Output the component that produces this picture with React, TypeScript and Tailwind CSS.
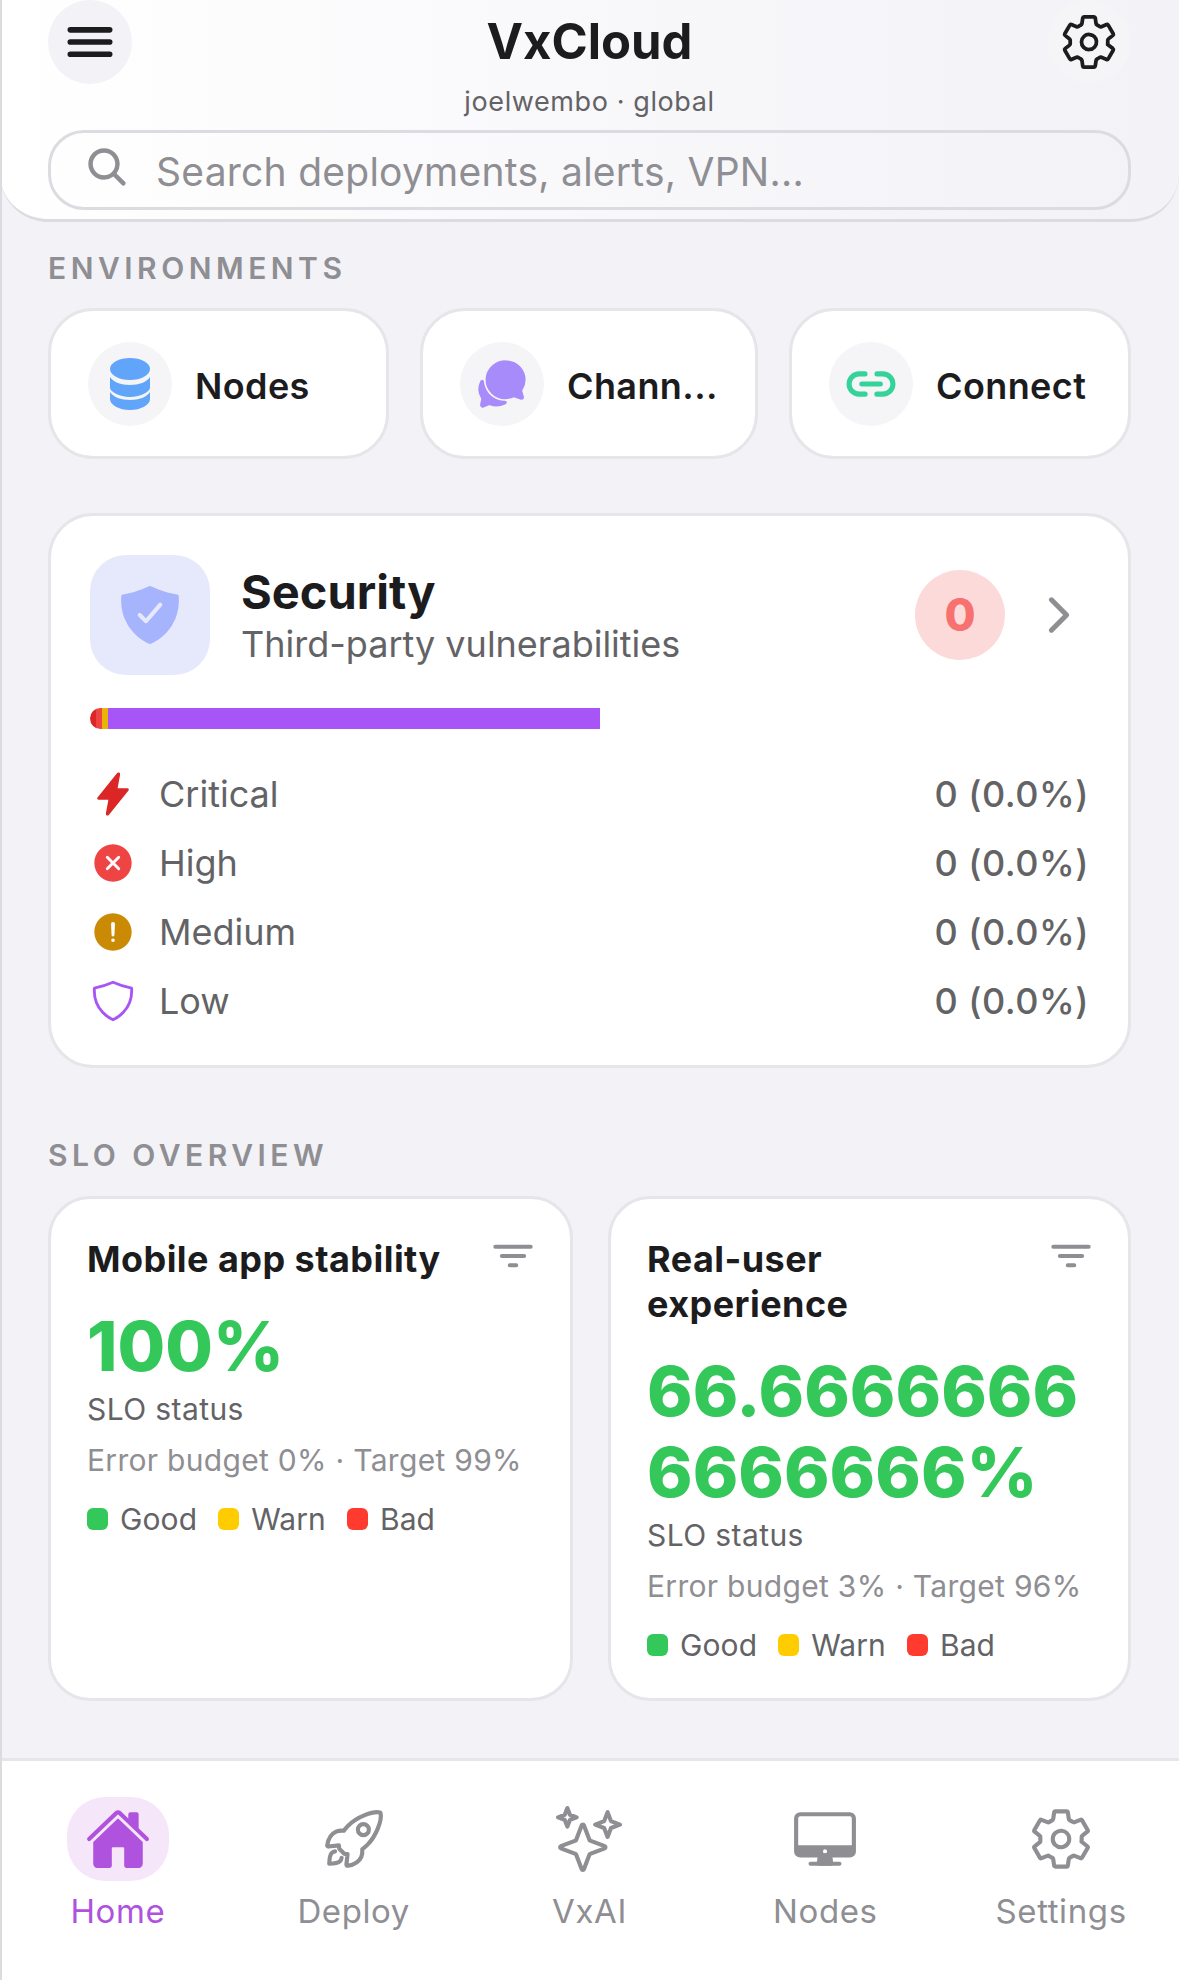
import type { ReactNode } from 'react';
import {
  IoMenu,
  IoSettingsOutline,
  IoSearch,
  IoChatbubbles,
  IoLink,
  IoShieldCheckmark,
  IoChevronForward,
  IoFlash,
  IoCloseCircle,
  IoAlertCircle,
  IoShieldOutline,
  IoFilter,
  IoHome,
  IoRocketOutline,
  IoSparklesOutline,
  IoDesktopOutline,
} from 'react-icons/io5';

function SectionLabel({ children, className }: { children: ReactNode; className: string }) {
  return (
    <div className={`px-[48px] text-[30px] leading-[36px] font-semibold tracking-[4.5px] text-[#8e8e93] ${className}`}>
      {children}
    </div>
  );
}

function DatabaseIcon() {
  return (
    <svg width="40" height="52" viewBox="0 0 40 52" className="text-[#60a5fa]" fill="currentColor">
      <ellipse cx="20" cy="11" rx="20" ry="11" />
      <path d="M0 19c3 5 11 8 20 8s17-3 20-8v11c0 3-9 9-20 9S0 33 0 30z" />
      <path d="M0 34c3 5 11 8 20 8s17-3 20-8v7c0 6-9 11-20 11S0 47 0 41z" />
    </svg>
  );
}

function EnvCard({ icon, label }: { icon: ReactNode; label: string }) {
  return (
    <div className="min-w-0 h-[151px] flex items-center gap-[23px] pl-[37px] bg-white border-[3px] border-[#e5e5ea] rounded-[45px]">
      <div className="w-[84px] h-[84px] shrink-0 rounded-full bg-[#f5f5f7] flex items-center justify-center">{icon}</div>
      <span className="mt-[4px] text-[36px] tracking-[0.4px] font-semibold text-[#1c1c1e]">{label}</span>
    </div>
  );
}

function SeverityRow({ icon, label }: { icon: ReactNode; label: string }) {
  return (
    <div className="h-[69px] flex items-center">
      <div className="w-[46px] flex justify-center">{icon}</div>
      <span className="ml-[23px] text-[36px] text-[#636366]">{label}</span>
      <span className="ml-auto -mr-[3px] text-[36px] tracking-[0.5px] font-medium text-[#636366]">0 (0.0%)</span>
    </div>
  );
}

function Legend() {
  const items = [
    ['Good', 'bg-[#34c759]'],
    ['Warn', 'bg-[#ffcc00]'],
    ['Bad', 'bg-[#ff3b30]'],
  ];
  return (
    <div className="flex items-center gap-[21px] mt-[19px]">
      {items.map(([name, color]) => (
        <div key={name} className="flex items-center gap-[12px]">
          <span className={`w-[21px] h-[22px] rounded-[6px] ${color}`} />
          <span className="text-[30px] leading-[40px] tracking-[0.1px] text-[#636366]">{name}</span>
        </div>
      ))}
    </div>
  );
}

function SloCard({ title, value, budget, target }: { title: string; value: string; budget: string; target: string }) {
  return (
    <div className="min-w-0 h-[505px] bg-white border-[3px] border-[#e5e5ea] rounded-[42px] pt-[38px] pl-[36px] pr-[36px]">
      <div className="flex items-start justify-between">
        <div className="max-w-[370px] text-[36px] leading-[45px] tracking-[0.45px] font-bold text-[#1c1c1e]">{title}</div>
        <IoFilter size={42} className="shrink-0 text-[#8e8e93] -mt-[2px]" />
      </div>
      <div className="text-[69px] leading-[81px] font-extrabold text-[#34c759] break-all mt-[24px]">{value}</div>
      <div className="text-[30px] leading-[40px] tracking-[0.4px] text-[#636366] mt-[2px]">SLO status</div>
      <div className="text-[30px] leading-[40px] tracking-[0.3px] text-[#8e8e93] mt-[11px]">
        Error budget {budget} · Target {target}
      </div>
      <Legend />
    </div>
  );
}

function NavItem({ icon, label, active }: { icon: ReactNode; label: string; active?: boolean }) {
  return (
    <div className="flex flex-col items-center">
      <div className={`w-[102px] h-[84px] rounded-[38px] flex items-center justify-center ${active ? 'bg-[#f5e6fa]' : ''}`}>
        {icon}
      </div>
      <span className={`mt-[10px] text-[33px] leading-[40px] tracking-[0.6px] ${active ? 'text-[#af52de]' : 'text-[#8e8e93]'}`}>
        {label}
      </span>
    </div>
  );
}

export default function App() {
  return (
    <div className="relative w-[1179px] h-[1980px] overflow-hidden flex flex-col bg-[#f2f2f7] font-['Inter',sans-serif]">
      <div className="absolute inset-y-0 left-0 w-[2px] bg-[#dcdce0]" />

      {/* header */}
      <header className="h-[222px] shrink-0 px-[48px] bg-gradient-to-r from-white to-[#f2f2f7] border-b-[3px] border-[#dcdce0] rounded-b-[48px]">
        <div className="flex items-start justify-between h-[84px]">
          <div className="w-[84px] h-[84px] rounded-full bg-[#f2f2f7] flex items-center justify-center">
            <IoMenu size={60} className="text-[#1c1c1e]" />
          </div>
          <div className="text-[49px] leading-[84px] font-bold text-[#1c1c1e]">VxCloud</div>
          <div className="w-[84px] h-[84px] rounded-full bg-[#f5f5f7] flex items-center justify-center">
            <IoSettingsOutline size={60} className="text-[#1c1c1e]" />
          </div>
        </div>
        <div className="text-center text-[27px] leading-[36px] tracking-[0.6px] text-[#636366]">joelwembo · global</div>
        <div className="mt-[10px] h-[80px] flex items-center gap-[26px] pl-[33px] border-[3px] border-[#dcdce0] rounded-[36px]">
          <IoSearch size={46} className="text-[#8e8e93] -mt-[6px]" />
          <span className="mt-[4px] text-[39px] tracking-[0.25px] text-[#8e8e93]">Search deployments, alerts, VPN...</span>
        </div>
      </header>

      <SectionLabel className="mt-[28px]">ENVIRONMENTS</SectionLabel>
      <div className="grid grid-cols-[341px_338px_342px] gap-[31px] px-[48px] mt-[22px]">
        <EnvCard icon={<DatabaseIcon />} label="Nodes" />
        <EnvCard icon={<IoChatbubbles size={54} className="text-[#a78bfa]" />} label="Chann..." />
        <EnvCard icon={<IoLink size={54} className="text-[#34d399]" />} label="Connect" />
      </div>

      {/* security */}
      <section className="mx-[48px] mt-[54px] h-[555px] bg-white border-[3px] border-[#e5e5ea] rounded-[45px] pt-[39px] px-[39px]">
        <div className="flex items-center">
          <div className="w-[120px] h-[120px] rounded-[36px] bg-[#e6e8fc] flex items-center justify-center">
            <IoShieldCheckmark size={66} className="text-[#a5b4fc]" />
          </div>
          <div className="ml-[31px]">
            <div className="text-[47px] leading-[58px] font-bold text-[#1c1c1e]">Security</div>
            <div className="text-[36px] leading-[46px] text-[#636366]">Third-party vulnerabilities</div>
          </div>
          <div className="ml-auto w-[90px] h-[90px] rounded-full bg-[#fcdada] flex items-center justify-center text-[45px] font-extrabold text-[#f87171]">
            0
          </div>
          <IoChevronForward size={54} className="ml-[27px] mr-[3px] text-[#8e8e93]" />
        </div>
        <div className="flex w-[510px] h-[21px] mt-[33px] rounded-l-full overflow-hidden">
          <div className="w-[6px] bg-[#dc2626]" />
          <div className="w-[6px] bg-[#ef4444]" />
          <div className="w-[6px] bg-[#eab308]" />
          <div className="flex-1 bg-[#a855f7]" />
        </div>
        <div className="mt-[30px] pr-[3px]">
          <SeverityRow icon={<IoFlash size={46} className="text-[#dc2626]" />} label="Critical" />
          <SeverityRow icon={<IoCloseCircle size={48} className="text-[#ef4444]" />} label="High" />
          <SeverityRow icon={<IoAlertCircle size={48} className="text-[#ca8a04]" />} label="Medium" />
          <SeverityRow icon={<IoShieldOutline size={48} className="text-[#a855f7]" />} label="Low" />
        </div>
      </section>

      <SectionLabel className="mt-[69px]">SLO OVERVIEW</SectionLabel>
      <div className="grid grid-cols-[525px_523px] gap-[35px] px-[48px] mt-[23px]">
        <SloCard title="Mobile app stability" value="100%" budget="0%" target="99%" />
        <SloCard title="Real-user experience" value="66.66666666666666%" budget="3%" target="96%" />
      </div>

      {/* tab bar */}
      <nav className="mt-auto h-[222px] shrink-0 grid grid-cols-5 pt-[36px] bg-white border-t-[3px] border-[#e5e5ea]">
        <NavItem active icon={<IoHome size={66} className="text-[#af52de]" />} label="Home" />
        <NavItem icon={<IoRocketOutline size={66} className="text-[#8e8e93]" />} label="Deploy" />
        <NavItem icon={<IoSparklesOutline size={66} className="text-[#8e8e93]" />} label="VxAI" />
        <NavItem icon={<IoDesktopOutline size={66} className="text-[#8e8e93]" />} label="Nodes" />
        <NavItem icon={<IoSettingsOutline size={66} className="text-[#8e8e93]" />} label="Settings" />
      </nav>
    </div>
  );
}
